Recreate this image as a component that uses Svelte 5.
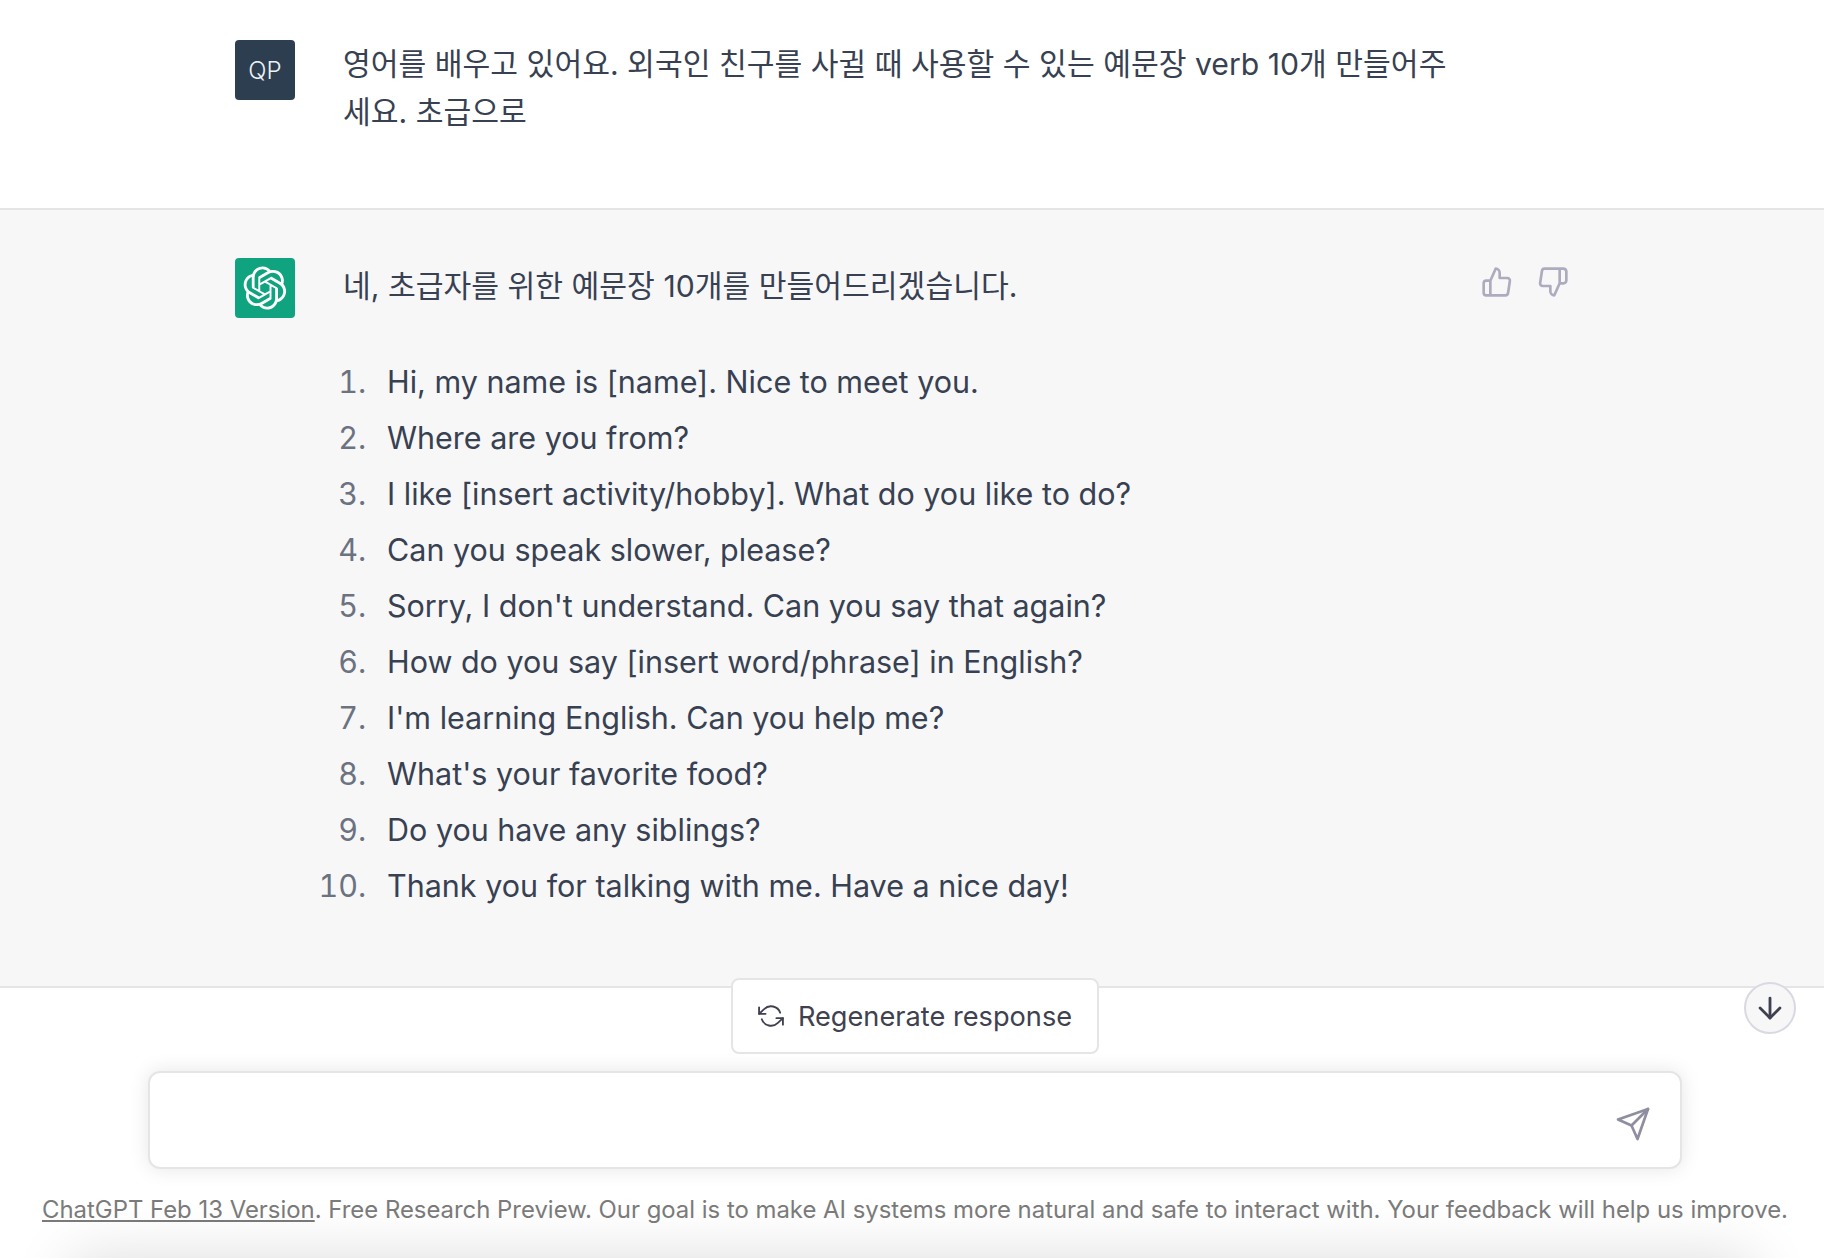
<script lang="ts">
  const phrases = [
    'Hi, my name is [name]. Nice to meet you.',
    'Where are you from?',
    'I like [insert activity/hobby]. What do you like to do?',
    'Can you speak slower, please?',
    "Sorry, I don't understand. Can you say that again?",
    'How do you say [insert word/phrase] in English?',
    "I'm learning English. Can you help me?",
    "What's your favorite food?",
    'Do you have any siblings?',
    'Thank you for talking with me. Have a nice day!'
  ];
</script>

<div class="page">
  <section class="row user">
    <div class="inner">
      <div class="avatar qp">QP</div>
      <p class="msg">영어를 배우고 있어요. 외국인 친구를 사귈 때 사용할 수 있는 예문장 verb 10개 만들어주세요. 초급으로</p>
    </div>
  </section>

  <section class="row bot">
    <div class="inner">
      <div class="avatar gpt">
        <svg width="44" height="44" viewBox="0 0 41 41" fill="none">
          <path fill="#fff" d="M37.5324 16.8707C37.9808 15.5241 38.1363 14.0974 37.9886 12.6859C37.8409 11.2744 37.3934 9.91076 36.676 8.68622C35.6126 6.83404 33.9882 5.3676 32.0373 4.4985C30.0864 3.62941 27.9098 3.40259 25.8215 3.85078C24.8796 2.7893 23.7219 1.94125 22.4257 1.36341C21.1295 0.785575 19.7249 0.491269 18.3058 0.500197C16.1708 0.495044 14.0893 1.16803 12.3614 2.42214C10.6335 3.67624 9.34853 5.44666 8.6917 7.47815C7.30085 7.76286 5.98686 8.3414 4.8377 9.17505C3.68854 10.0087 2.73073 11.0782 2.02839 12.312C0.956464 14.1591 0.498905 16.2988 0.721698 18.4228C0.944492 20.5467 1.83612 22.5449 3.268 24.1293C2.81966 25.4759 2.66413 26.9026 2.81182 28.3141C2.95951 29.7256 3.40701 31.0892 4.12437 32.3138C5.18791 34.1659 6.8123 35.6322 8.76321 36.5013C10.7141 37.3704 12.8907 37.5973 14.9789 37.1492C15.9208 38.2107 17.0786 39.0587 18.3747 39.6366C19.6709 40.2144 21.0755 40.5087 22.4946 40.4998C24.6307 40.5054 26.7133 39.8321 28.4418 38.5772C30.1704 37.3223 31.4556 35.5506 32.1119 33.5179C33.5027 33.2332 34.8167 32.6547 35.9659 31.821C37.115 30.9874 38.0728 29.9178 38.7752 28.684C39.8458 26.8371 40.3023 24.6979 40.0789 22.5748C39.8556 20.4517 38.9639 18.4544 37.5324 16.8707ZM22.4978 37.8849C20.7443 37.8874 19.0459 37.2733 17.6994 36.1501C17.7601 36.117 17.8666 36.0586 17.936 36.0161L25.9004 31.4156C26.1003 31.3019 26.2663 31.137 26.3813 30.9378C26.4964 30.7386 26.5563 30.5124 26.5549 30.2825V19.0542L29.9213 20.998C29.9389 21.0068 29.9541 21.0198 29.9656 21.0359C29.977 21.052 29.9842 21.0707 29.9867 21.0902V30.3889C29.9842 32.375 29.1946 34.2791 27.7909 35.6841C26.3872 37.0892 24.4838 37.8806 22.4978 37.8849ZM6.39227 31.0064C5.51397 29.4888 5.19742 27.7107 5.49804 25.9832C5.55718 26.0187 5.66048 26.0818 5.73461 26.1244L13.699 30.7248C13.8975 30.8408 14.1233 30.902 14.3532 30.902C14.583 30.902 14.8088 30.8408 15.0073 30.7248L24.731 25.1103V28.9979C24.7321 29.0177 24.7283 29.0376 24.7199 29.0556C24.7115 29.0736 24.6988 29.0893 24.6829 29.1012L16.6317 33.7497C14.9096 34.7416 12.8643 35.0097 10.9447 34.4954C9.02506 33.9811 7.38785 32.7263 6.39227 31.0064ZM4.29707 13.6194C5.17156 12.0998 6.55279 10.9364 8.19885 10.3327C8.19885 10.4013 8.19491 10.5228 8.19491 10.6071V19.808C8.19351 20.0378 8.25334 20.2638 8.36823 20.4629C8.48312 20.6619 8.64893 20.8267 8.84863 20.9404L18.5723 26.5542L15.206 28.4979C15.1894 28.5089 15.1703 28.5155 15.1505 28.5173C15.1307 28.5191 15.1107 28.516 15.0924 28.5082L7.04046 23.8557C5.32135 22.8601 4.06716 21.2235 3.55289 19.3046C3.03862 17.3858 3.30624 15.3413 4.29707 13.6194ZM31.955 20.0556L22.2312 14.4411L25.5976 12.4981C25.6142 12.4872 25.6333 12.4805 25.6531 12.4787C25.6729 12.4769 25.6928 12.4801 25.7111 12.4879L33.7631 17.1364C34.9967 17.849 36.0017 18.8982 36.6606 20.1613C37.3194 21.4244 37.6047 22.849 37.4832 24.2684C37.3617 25.6878 36.8382 27.0432 35.9743 28.1759C35.1103 29.3086 33.9415 30.1717 32.6047 30.6641C32.6047 30.5947 32.6047 30.4733 32.6047 30.3889V21.188C32.6066 20.9586 32.5474 20.7328 32.4332 20.5338C32.319 20.3348 32.154 20.1698 31.955 20.0556ZM35.3055 15.0128C35.2464 14.9765 35.1431 14.9142 35.069 14.8717L27.1045 10.2712C26.906 10.1554 26.6803 10.0943 26.4504 10.0943C26.2206 10.0943 25.9948 10.1554 25.7963 10.2712L16.0726 15.8858V11.9982C16.0715 11.9783 16.0753 11.9585 16.0837 11.9405C16.0921 11.9225 16.1048 11.9068 16.1207 11.8949L24.1719 7.25025C25.4053 6.53903 26.8158 6.19376 28.2383 6.25482C29.6608 6.31589 31.0364 6.78077 32.2044 7.59508C33.3723 8.40939 34.2842 9.53945 34.8334 10.8531C35.3826 12.1667 35.5464 13.6095 35.3055 15.0128ZM14.2424 21.9419L10.8752 19.9981C10.8576 19.9893 10.8423 19.9763 10.8309 19.9602C10.8195 19.9441 10.8122 19.9254 10.8098 19.9058V10.6071C10.8107 9.18295 11.2173 7.78848 11.9819 6.58696C12.7466 5.38544 13.8377 4.42659 15.1275 3.82264C16.4173 3.21869 17.8524 2.99464 19.2649 3.1767C20.6775 3.35876 22.0089 3.93941 23.1034 4.85067C23.0427 4.88379 22.937 4.94215 22.8668 4.98473L14.9024 9.58517C14.7025 9.69878 14.5366 9.86356 14.4215 10.0626C14.3065 10.2616 14.2466 10.4877 14.2479 10.7175L14.2424 21.9419ZM16.071 17.9991L20.4018 15.4978L24.7325 17.9975V22.9985L20.4018 25.4983L16.071 22.9985V17.9991Z" />
        </svg>
      </div>
      <div class="body">
        <p class="msg">네, 초급자를 위한 예문장 10개를 만들어드리겠습니다.</p>
        <ol>
          {#each phrases as phrase}
            <li>{phrase}</li>
          {/each}
        </ol>
      </div>
      <div class="votes">
        <svg class="vote" width="32" height="32" viewBox="0 0 24 24" fill="none" stroke="currentColor" stroke-width="2" stroke-linecap="round" stroke-linejoin="round">
          <path d="M14 9V5a3 3 0 0 0-3-3l-4 9v11h11.28a2 2 0 0 0 2-1.7l1.38-9a2 2 0 0 0-2-2.3zM7 22H4a2 2 0 0 1-2-2v-7a2 2 0 0 1 2-2h3" />
        </svg>
        <svg class="vote" width="32" height="32" viewBox="0 0 24 24" fill="none" stroke="currentColor" stroke-width="2" stroke-linecap="round" stroke-linejoin="round">
          <path d="M10 15v4a3 3 0 0 0 3 3l4-9V2H5.72a2 2 0 0 0-2 1.7l-1.38 9a2 2 0 0 0 2 2.3zm7-13h2.67A2.31 2.31 0 0 1 22 4v7a2.31 2.31 0 0 1-2.33 2H17" />
        </svg>
      </div>
    </div>
  </section>

  <section class="composer">
    <button class="regen">
      <svg width="26" height="26" viewBox="0 0 24 24" fill="none" stroke="currentColor" stroke-width="1.7" stroke-linecap="round" stroke-linejoin="round">
        <polyline points="1 4 1 10 7 10" />
        <polyline points="23 20 23 14 17 14" />
        <path d="M20.49 9A9 9 0 0 0 5.64 5.64L1 10m22 4l-4.64 4.36A9 9 0 0 1 3.51 15" />
      </svg>
      Regenerate response
    </button>

    <button class="scroll" aria-label="Scroll to bottom">
      <svg width="34" height="34" viewBox="0 0 24 24" fill="none" stroke="currentColor" stroke-width="2" stroke-linecap="round" stroke-linejoin="round">
        <line x1="12" y1="5" x2="12" y2="19" />
        <polyline points="19 12 12 19 5 12" />
      </svg>
    </button>

    <div class="input">
      <svg class="send" width="36" height="36" viewBox="0 0 24 24" fill="none" stroke="currentColor" stroke-width="1.8" stroke-linecap="round" stroke-linejoin="round">
        <line x1="22" y1="2" x2="11" y2="13" />
        <polygon points="22 2 15 22 11 13 2 9 22 2" />
      </svg>
    </div>

    <p class="note"><u>ChatGPT Feb 13 Version</u>. Free Research Preview. Our goal is to make AI systems more natural and safe to interact with. Your feedback will help us improve.</p>

    <div class="edge"></div>
  </section>
</div>

<style>
  :global(body) {
    margin: 0;
    background: #fff;
  }

  .page {
    height: 1258px;
    overflow: hidden;
    display: flex;
    flex-direction: column;
    font-family: Inter, "Noto Sans CJK KR", sans-serif;
    color: #374151;
  }

  .row {
    flex: none;
    border-bottom: 2px solid #e5e5e5;
  }
  .user {
    height: 208px;
    background: #fff;
  }
  .bot {
    height: 776px;
    background: #f7f7f8;
  }

  .inner {
    width: 1536px;
    box-sizing: border-box;
    margin: 0 auto;
    padding: 48px 0 0 91px;
    display: flex;
    position: relative;
  }
  .user .inner {
    padding-top: 40px;
  }

  .avatar {
    flex: none;
    width: 60px;
    height: 60px;
    border-radius: 4px;
    display: flex;
    align-items: center;
    justify-content: center;
    color: #eef2f5;
    font-size: 24px;
    font-weight: 300;
  }
  .qp {
    background: #2c3e50;
  }
  .gpt {
    background: #10a37f;
  }

  .msg {
    margin: 0 0 0 48px;
    width: 1112px;
    font-size: 30.2px;
    line-height: 48px;
  }
  .bot .msg {
    margin-top: 4px;
  }

  .body {
    flex: none;
  }

  ol {
    margin: 44px 0 0 48px;
    padding: 0 0 0 44px;
    font-size: 30.5px;
    line-height: 56px;
  }
  li::marker {
    color: #6b7280;
    content: counter(list-item) ".\2002\2009";
  }

  .votes {
    position: absolute;
    left: 1337px;
    top: 56px;
    display: flex;
    gap: 24px;
    color: #acacbe;
  }

  .composer {
    position: relative;
    flex: 1;
    box-sizing: border-box;
    padding-left: 6px;
    display: flex;
    flex-direction: column;
    align-items: center;
  }

  .regen {
    margin-top: -10px;
    height: 76px;
    width: 368px;
    box-sizing: border-box;
    display: flex;
    align-items: center;
    justify-content: center;
    gap: 14px;
    background: #fff;
    border: 2px solid #e5e5e5;
    border-radius: 8px;
    color: #40414f;
    font: 27.2px Inter, sans-serif;
    padding: 0;
  }

  .scroll {
    position: absolute;
    right: 28px;
    top: -6px;
    width: 52px;
    height: 52px;
    padding: 0;
    border-radius: 50%;
    border: 2px solid #d9d9e3;
    background: #f7f7f8;
    color: #40414f;
    display: flex;
    align-items: center;
    justify-content: center;
  }

  .input {
    margin-top: 17px;
    width: 1534px;
    height: 98px;
    box-sizing: border-box;
    flex: none;
    border: 2px solid #e5e5e5;
    border-radius: 12px;
    background: #fff;
    box-shadow: 0 0 20px rgba(0, 0, 0, 0.1);
    position: relative;
  }
  .send {
    position: absolute;
    right: 29px;
    top: 33px;
    color: #8e8ea0;
  }

  .note {
    margin: 23px 0 0;
    font-size: 23.9px;
    line-height: 36px;
    color: #7b7b7b;
    white-space: nowrap;
  }

  /* soft window shadow creeping up from the bottom edge */
  .edge {
    position: absolute;
    left: 70px;
    right: 70px;
    bottom: -60px;
    height: 60px;
    box-shadow: 0 0 60px rgba(0, 0, 0, 0.14);
  }
</style>
